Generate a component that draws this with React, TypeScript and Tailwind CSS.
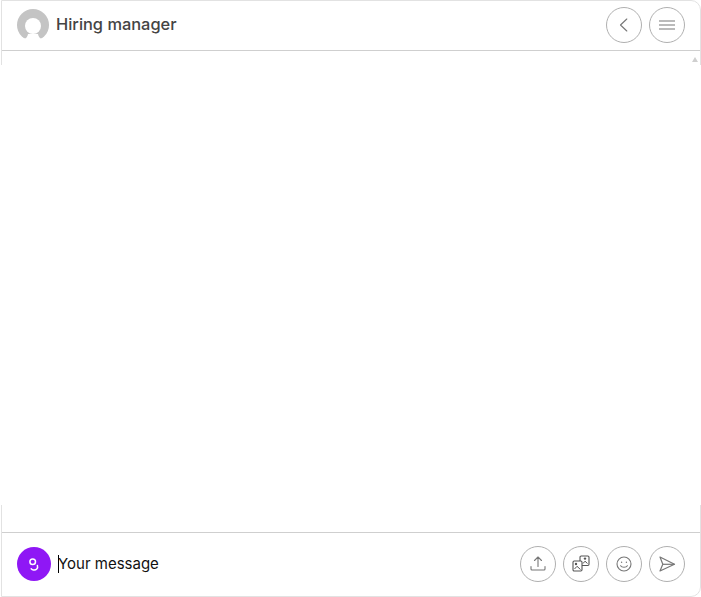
function RoundButton({ children }: { children: React.ReactNode }) {
  return (
    <button className="flex h-9 w-9 items-center justify-center rounded-full border border-[#b0b0b0] bg-white">
      {children}
    </button>
  );
}

function Avatar() {
  return (
    <svg width="32" height="32" viewBox="0 0 32 32">
      <circle cx="16" cy="16" r="16" fill="#c4c4c4" />
      <circle cx="16" cy="17" r="8" fill="#fff" />
      <path d="M0 32 V29.5 H8 C9.5 29 10.5 27.5 11 25 H21 C21.5 27.5 22.5 29 24 29.5 H32 V32 Z" fill="#fff" />
    </svg>
  );
}

function BackIcon() {
  return (
    <svg width="18" height="18" viewBox="0 0 18 18" fill="none" stroke="#777" strokeWidth="1.1" strokeLinecap="round" strokeLinejoin="round">
      <path d="M11.8 3 L5.5 9 L11.8 15" />
    </svg>
  );
}

function MenuIcon() {
  return (
    <svg width="18" height="18" viewBox="0 0 18 18" fill="none" stroke="#777" strokeWidth="1.2">
      <path d="M1 5 H17 M1 9 H17 M1 13 H17" />
    </svg>
  );
}

function UploadIcon() {
  return (
    <svg width="18" height="18" viewBox="0 0 18 18" fill="none" stroke="#777" strokeWidth="1.1" strokeLinecap="round" strokeLinejoin="round">
      <path d="M9 2 V11.5 M5.5 5.5 L9 2 L12.5 5.5" />
      <path d="M2 11.5 V14 a1 1 0 0 0 1 1 H15 a1 1 0 0 0 1 -1 V11.5" />
    </svg>
  );
}

function StickerIcon() {
  return (
    <svg width="18" height="18" viewBox="0 0 18 18" fill="none" stroke="#555" strokeWidth="1.1">
      <rect x="8" y="1" width="9" height="9.5" rx="1.2" fill="#fff" />
      <rect x="1" y="6" width="9" height="10" rx="1.2" fill="#fff" />
      <circle cx="13" cy="3.6" r="1.2" fill="#555" stroke="none" />
      <path d="M11 8.5 L13 6.2 L15.5 8.5" strokeWidth="1" />
      <circle cx="4" cy="9" r="1.2" fill="#555" stroke="none" />
      <path d="M2.5 14 L5 11.3 L8.5 14.5" strokeWidth="1" />
    </svg>
  );
}

function SmileIcon() {
  return (
    <svg width="18" height="18" viewBox="0 0 18 18" fill="none" stroke="#777" strokeWidth="1.1" strokeLinecap="round">
      <circle cx="9" cy="9" r="7" />
      <circle cx="6.6" cy="7.2" r="0.7" fill="#777" stroke="none" />
      <circle cx="11.4" cy="7.2" r="0.7" fill="#777" stroke="none" />
      <path d="M5.6 10.8 C6.8 12.8 11.2 12.8 12.4 10.8" />
    </svg>
  );
}

function SendIcon() {
  return (
    <svg width="18" height="18" viewBox="0 0 18 18" fill="none" stroke="#777" strokeWidth="1.2" strokeLinejoin="round">
      <path d="M2 2 L16.5 9.3 L2 16 L4.8 9.3 Z" />
      <path d="M4.8 9.3 H16.5" />
    </svg>
  );
}

function ChatLogo() {
  return (
    <svg width="14" height="16" viewBox="0 0 14 16" fill="none" stroke="#fff" strokeWidth="1.5" strokeLinecap="round">
      <circle cx="5.7" cy="5.7" r="2.8" />
      <path d="M10.4 9.5 C11.4 12.5 9 14.5 6.5 14 C5.5 13.8 4.8 13.4 4.2 12.8" />
    </svg>
  );
}

export default function App() {
  return (
    <div className="ml-px flex h-[597px] w-[700px] flex-col rounded-r-[10px] border border-[#e2e2e2] bg-white font-['Inter',sans-serif]">
      <header className="flex h-[50px] shrink-0 items-center justify-between border-b border-[#cfcfcf] px-[15px] pb-px">
        <div className="flex items-center gap-[7px]">
          <Avatar />
          <span className="pb-[2px] text-[16.4px] font-medium text-[#444]">Hiring manager</span>
        </div>
        <div className="flex gap-[7px]">
          <RoundButton>
            <BackIcon />
          </RoundButton>
          <RoundButton>
            <MenuIcon />
          </RoundButton>
        </div>
      </header>

      <main className="relative flex-1 pt-[14px] pb-[27px]">
        <div className="-mx-px h-full bg-white" />
        <span className="absolute right-[2px] top-[6px] h-0 w-0 border-x-[3px] border-b-[5px] border-x-transparent border-b-[#cfcfcf]" />
      </main>

      <footer className="flex h-[64px] shrink-0 items-center justify-between border-t border-[#cfcfcf] px-[15px] pb-px">
        <div className="flex items-center gap-[7px]">
          <span className="flex h-[34px] w-[34px] items-center justify-center rounded-full bg-[#8f17f5]">
            <ChatLogo />
          </span>
          <div className="flex items-center">
            <span className="h-[18px] w-px bg-black" />
            <span className="-ml-px pb-px text-[15px] leading-[22px] text-[#111]">Your message</span>
          </div>
        </div>
        <div className="flex gap-[7px]">
          <RoundButton>
            <UploadIcon />
          </RoundButton>
          <RoundButton>
            <StickerIcon />
          </RoundButton>
          <RoundButton>
            <SmileIcon />
          </RoundButton>
          <RoundButton>
            <SendIcon />
          </RoundButton>
        </div>
      </footer>
    </div>
  );
}
